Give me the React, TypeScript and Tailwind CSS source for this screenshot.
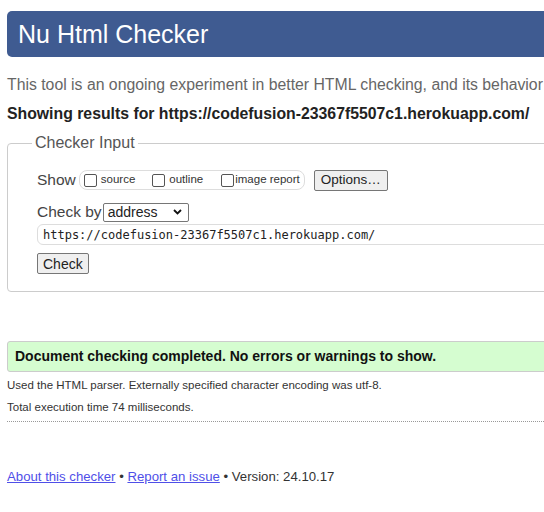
import React from "react";

const URL = "https://codefusion-23367f5507c1.herokuapp.com/";

export default function App() {
  return (
    <div className="w-[544px] h-[512px] overflow-hidden bg-white font-['Liberation_Sans',Arial,sans-serif] text-[#222]">
      <div className="w-[760px] pl-[7px] pt-[11px]">
        {/* Header */}
        <h1 className="h-[46px] rounded-[5px] bg-[#3f5b91] pl-[11px] flex items-center text-[25px] text-white leading-none">
          Nu Html Checker
        </h1>

        <p className="mt-[18px] text-[15.8px] text-[#666] leading-[20px] whitespace-nowrap">
          This tool is an ongoing experiment in better HTML checking, and its behavior
        </p>
        <p className="mt-[9px] text-[15.8px] font-bold leading-[20px] whitespace-nowrap">
          Showing results for {URL}
        </p>

        {/* Checker input */}
        <fieldset className="mt-[10px] border border-[#ccc] rounded-[4px] h-[158px]">
          <legend className="ml-[24px] px-[3px] text-[16px] text-[#555] leading-[18px]">Checker Input</legend>

          <div className="pl-[29px] pr-4 pt-[17px]">
            <div className="flex items-center h-[22px]">
              <span className="text-[15.5px] text-[#444] mr-[3px]">Show</span>
              <div className="flex items-center h-[20px] border border-[#ddd] rounded-[8px] px-[4px] text-[11.5px] text-[#333]">
                <label className="flex items-center mr-[17px]">
                  <span className="w-[13px] h-[13px] border border-[#555] rounded-[2px] mr-[4px]" />
                  source
                </label>
                <label className="flex items-center mr-[18px]">
                  <span className="w-[13px] h-[13px] border border-[#555] rounded-[2px] mr-[4px]" />
                  outline
                </label>
                <label className="flex items-center">
                  <span className="w-[13px] h-[13px] border border-[#555] rounded-[2px] mr-[1px]" />
                  image report
                </label>
              </div>
              <button className="ml-[9px] h-[21px] px-[6px] border border-[#767676] rounded-[2px] bg-[#efefef] text-[13.5px] text-[#222] leading-none">
                Options…
              </button>
            </div>

            <div className="flex items-center mt-[11px] h-[20px]">
              <span className="text-[15.5px] text-[#444] mr-[1px]">Check by</span>
              <div className="flex items-center justify-between w-[86px] h-[19px] border border-[#767676] rounded-[2px] pl-[4px] pr-[6px] text-[14px]">
                <span>address</span>
                <svg width="9" height="6" viewBox="0 0 9 6">
                  <path d="M1 1l3.5 3.5L8 1" stroke="#111" strokeWidth="1.8" fill="none" />
                </svg>
              </div>
            </div>

            <div className="mt-[2px] h-[21px] border border-[#ddd] rounded-[6px] flex items-center pl-[5px] font-['DejaVu_Sans_Mono',monospace] text-[12px] text-[#222]">
              {URL}
            </div>

            <button className="mt-[8px] h-[21px] px-[5px] border border-[#767676] rounded-[2px] bg-[#efefef] text-[14px] text-[#222] leading-none">
              Check
            </button>
          </div>
        </fieldset>

        {/* Success */}
        <div className="mt-[49px] h-[31px] border border-[#ccc] rounded-[3px] bg-[#d5fdd0] flex items-center pl-[7px] text-[14px] font-bold text-[#111]">
          Document checking completed. No errors or warnings to show.
        </div>

        <p className="mt-[2px] text-[11.5px] text-[#333] leading-[22px]">
          Used the HTML parser. Externally specified character encoding was utf-8.
        </p>
        <p className="text-[11.5px] text-[#333] leading-[22px]">Total execution time 74 milliseconds.</p>
        <div className="mt-[3px] border-t border-dotted border-[#999]" />

        {/* Footer */}
        <p className="mt-[47px] text-[13.2px] text-[#333] leading-[16px]">
          <a href="#" className="text-[#4f4fe8] underline">About this checker</a>
          {" • "}
          <a href="#" className="text-[#4f4fe8] underline">Report an issue</a>
          {" • Version: 24.10.17"}
        </p>
      </div>
    </div>
  );
}
